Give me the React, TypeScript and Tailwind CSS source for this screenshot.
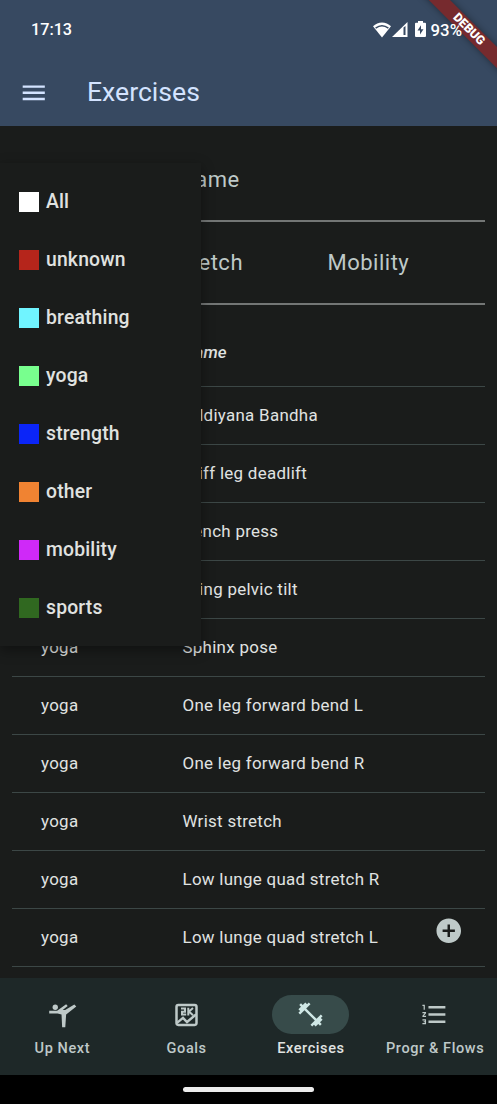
import { MdAddCircle, MdFitnessCenter, MdFormatListNumbered, MdMenu } from "react-icons/md";
import type { ReactNode } from "react";

const categories = [
  { name: "All", color: "bg-white" },
  { name: "unknown", color: "bg-[#b5251b]" },
  { name: "breathing", color: "bg-[#70f4ff]" },
  { name: "yoga", color: "bg-[#78ff8e]" },
  { name: "strength", color: "bg-[#0b25f8]" },
  { name: "other", color: "bg-[#f08332]" },
  { name: "mobility", color: "bg-[#cf29f8]" },
  { name: "sports", color: "bg-[#306820]" },
];

const exercises = [
  ["", "Uddiyana Bandha"],
  ["", "Stiff leg deadlift"],
  ["", "Bench press"],
  ["", "Lying pelvic tilt"],
  ["yoga", "Sphinx pose"],
  ["yoga", "One leg forward bend L"],
  ["yoga", "One leg forward bend R"],
  ["yoga", "Wrist stretch"],
  ["yoga", "Low lunge quad stretch R"],
  ["yoga", "Low lunge quad stretch L"],
];

function StatusBar() {
  return (
    <div className="relative z-40 flex h-[58px] items-center justify-between pl-[31px] pr-[35px] text-white">
      <span className="mt-[2px] text-[16.2px] font-medium leading-5">17:13</span>
      <div className="flex items-center">
        <svg className="mt-[1px] h-[16px] w-[18px]" viewBox="0 0 18 16" fill="none">
          <path d="M0 4.300C5-.9 13-.9 18 4.300L9 15.500Z" fill="white" />
          <path d="M2.600 6.100Q9 1.400 15.400 6.100" stroke="#374961" strokeWidth="1.500" />
        </svg>
        <svg className="ml-[1px] mt-[1px] h-[15px] w-[16px]" viewBox="0 0 16 15">
          <path d="M15.500 0V15H0Z" fill="white" />
          <path d="M11.500 5.500 13.500 4V13h-2Z" fill="#374961" />
        </svg>
        <svg className="ml-[7px] h-[16px] w-[11px]" viewBox="0 0 11 16">
          <path d="M3 0h5v1.800h2a1 1 0 0 1 1 1V15a1 1 0 0 1-1 1H1a1 1 0 0 1-1-1V2.800a1 1 0 0 1 1-1h2Z" fill="white" />
          <path d="M6 4.200 2.500 9.500H5v4l3.500-5.300H6Z" fill="#374961" />
        </svg>
        <span className="ml-[5px] mt-[1px] text-[16.800px] font-medium leading-5">93%</span>
      </div>
    </div>
  );
}

function DebugBanner() {
  return (
    <div className="absolute right-0 top-0 z-30 size-[80px] overflow-hidden">
      <div className="absolute left-[-8px] top-[21.500px] flex h-[14.500px] w-[120px] rotate-45 items-center justify-center bg-[#762a2e] text-[12.300px] font-black leading-none text-white shadow-[0_0_7px_rgba(0,0,0,0.4)]">
        DEBUG
      </div>
    </div>
  );
}

function CategoryMenu() {
  return (
    <div className="absolute left-0 top-[163px] z-20 w-[201px] bg-[#1a1c1b] pb-[10px] pt-[9px] shadow-[0_4px_12px_rgba(0,0,0,0.4)]">
      {categories.map(({ name, color }) => (
        <div key={name} className="flex h-[58px] items-center gap-[7px] pl-[19px]">
          <span className={`mt-px size-[20px] ${color}`} />
          <span className="mt-[2px] text-[19.330px] font-medium leading-6 tracking-[0.180px] text-[#e0e2e0]">{name}</span>
        </div>
      ))}
    </div>
  );
}

function GymnastIcon() {
  return (
    <svg className="size-[29px]" viewBox="0 0 24 24" fill="currentColor">
      <circle cx="6" cy="6" r="2.200" />
      <path d="M1 8.800h6.500l7.500-5.300 1.310 1.520L12.140 8.300H14.200L21.800 3.700 23.400 5.400 15 12 14.300 22.500h-2.600L11.200 12 8 11.200H1Z" />
    </svg>
  );
}

function GoalIcon() {
  return (
    <svg className="size-[29px]" viewBox="0 0 29 29" fill="none" stroke="currentColor">
      <rect x="4.500" y="4.900" width="20" height="20" rx="1.800" strokeWidth="2.500" />
      <path d="M9 8.600h4v3.100H10v2.900h4.200M16.300 7.700v7.800M21 8l-4 3.600 4 3.700" strokeWidth="2" />
      <path d="m5 22.800 6-5 4 4.200 9-7.500" strokeWidth="2.400" />
    </svg>
  );
}

function NavItem({ label, active, children }: { label: string; active?: boolean; children: ReactNode }) {
  return (
    <div className="flex flex-1 flex-col items-center pt-[17px]">
      <div className={`flex h-[39px] w-[77px] items-center justify-center rounded-full ${active ? "bg-[#374b4a] text-[#d0e8e6]" : "text-[#bec9c8]"}`}>
        {children}
      </div>
      <span className={`mt-[5px] whitespace-nowrap pl-[0.500px] text-[14.500px] font-medium leading-[20px] tracking-[0.600px] ${active ? "text-[#e0e3e2]" : "text-[#bec9c8]"}`}>
        {label}
      </span>
    </div>
  );
}

export default function App() {
  return (
    <div className="relative flex h-[1104px] w-[497px] flex-col overflow-hidden bg-[#1a1c1b] font-[Roboto,sans-serif]">
      <header className="h-[126px] shrink-0 bg-[#374961]">
        <StatusBar />
        <div className="flex h-[68px] items-center pl-[19px] text-[#d3e3ff]">
          <MdMenu className="mt-px size-[29.500px]" />
          <h1 className="ml-[38.500px] text-[26.600px] font-normal leading-8">Exercises</h1>
        </div>
      </header>

      <main className="relative min-h-0 flex-1 overflow-hidden px-3">
        <div className="flex h-[96px] items-center border-b-2 border-[#737675] pl-[167px] pt-[13px] text-[22px] tracking-[0.500px] text-[#bec9c8]">
          Name
        </div>
        <div className="flex h-[83px] items-center border-b-2 border-[#737675] text-[22px] tracking-[0.500px] text-[#bec9c8]">
          <span className="w-[315.500px] pl-[157.500px]">Stretch</span>
          <span>Mobility</span>
        </div>
        <div className="flex h-[82px] items-center border-b border-[#3c4746] pl-[171px] pt-[14px] text-[16.900px] font-medium italic text-[#e0e3e2]">
          Name
        </div>
        {exercises.map(([type, name]) => (
          <div key={name} className="flex h-[58px] items-center border-b border-[#3c4746] pl-[29px] text-[16.900px] tracking-[0.300px] text-[#e0e3e2]">
            <span className="w-[141.500px]">{type}</span>
            <span>{name}</span>
          </div>
        ))}
        <MdAddCircle className="absolute left-[434px] top-[789.500px] size-[29.500px] text-[#bec9c8]" />
      </main>

      <nav className="flex h-[97px] shrink-0 bg-[#1e2828]">
        <NavItem label="Up Next"><GymnastIcon /></NavItem>
        <NavItem label="Goals"><GoalIcon /></NavItem>
        <NavItem label="Exercises" active><MdFitnessCenter className="size-[29px]" /></NavItem>
        <NavItem label="Progr &amp; Flows"><MdFormatListNumbered className="size-[29px]" /></NavItem>
      </nav>
      <div className="flex h-[29px] shrink-0 items-center justify-center bg-black">
        <div className="h-[5px] w-[131px] rounded-full bg-[#ececec]" />
      </div>

      <CategoryMenu />
      <DebugBanner />
    </div>
  );
}
